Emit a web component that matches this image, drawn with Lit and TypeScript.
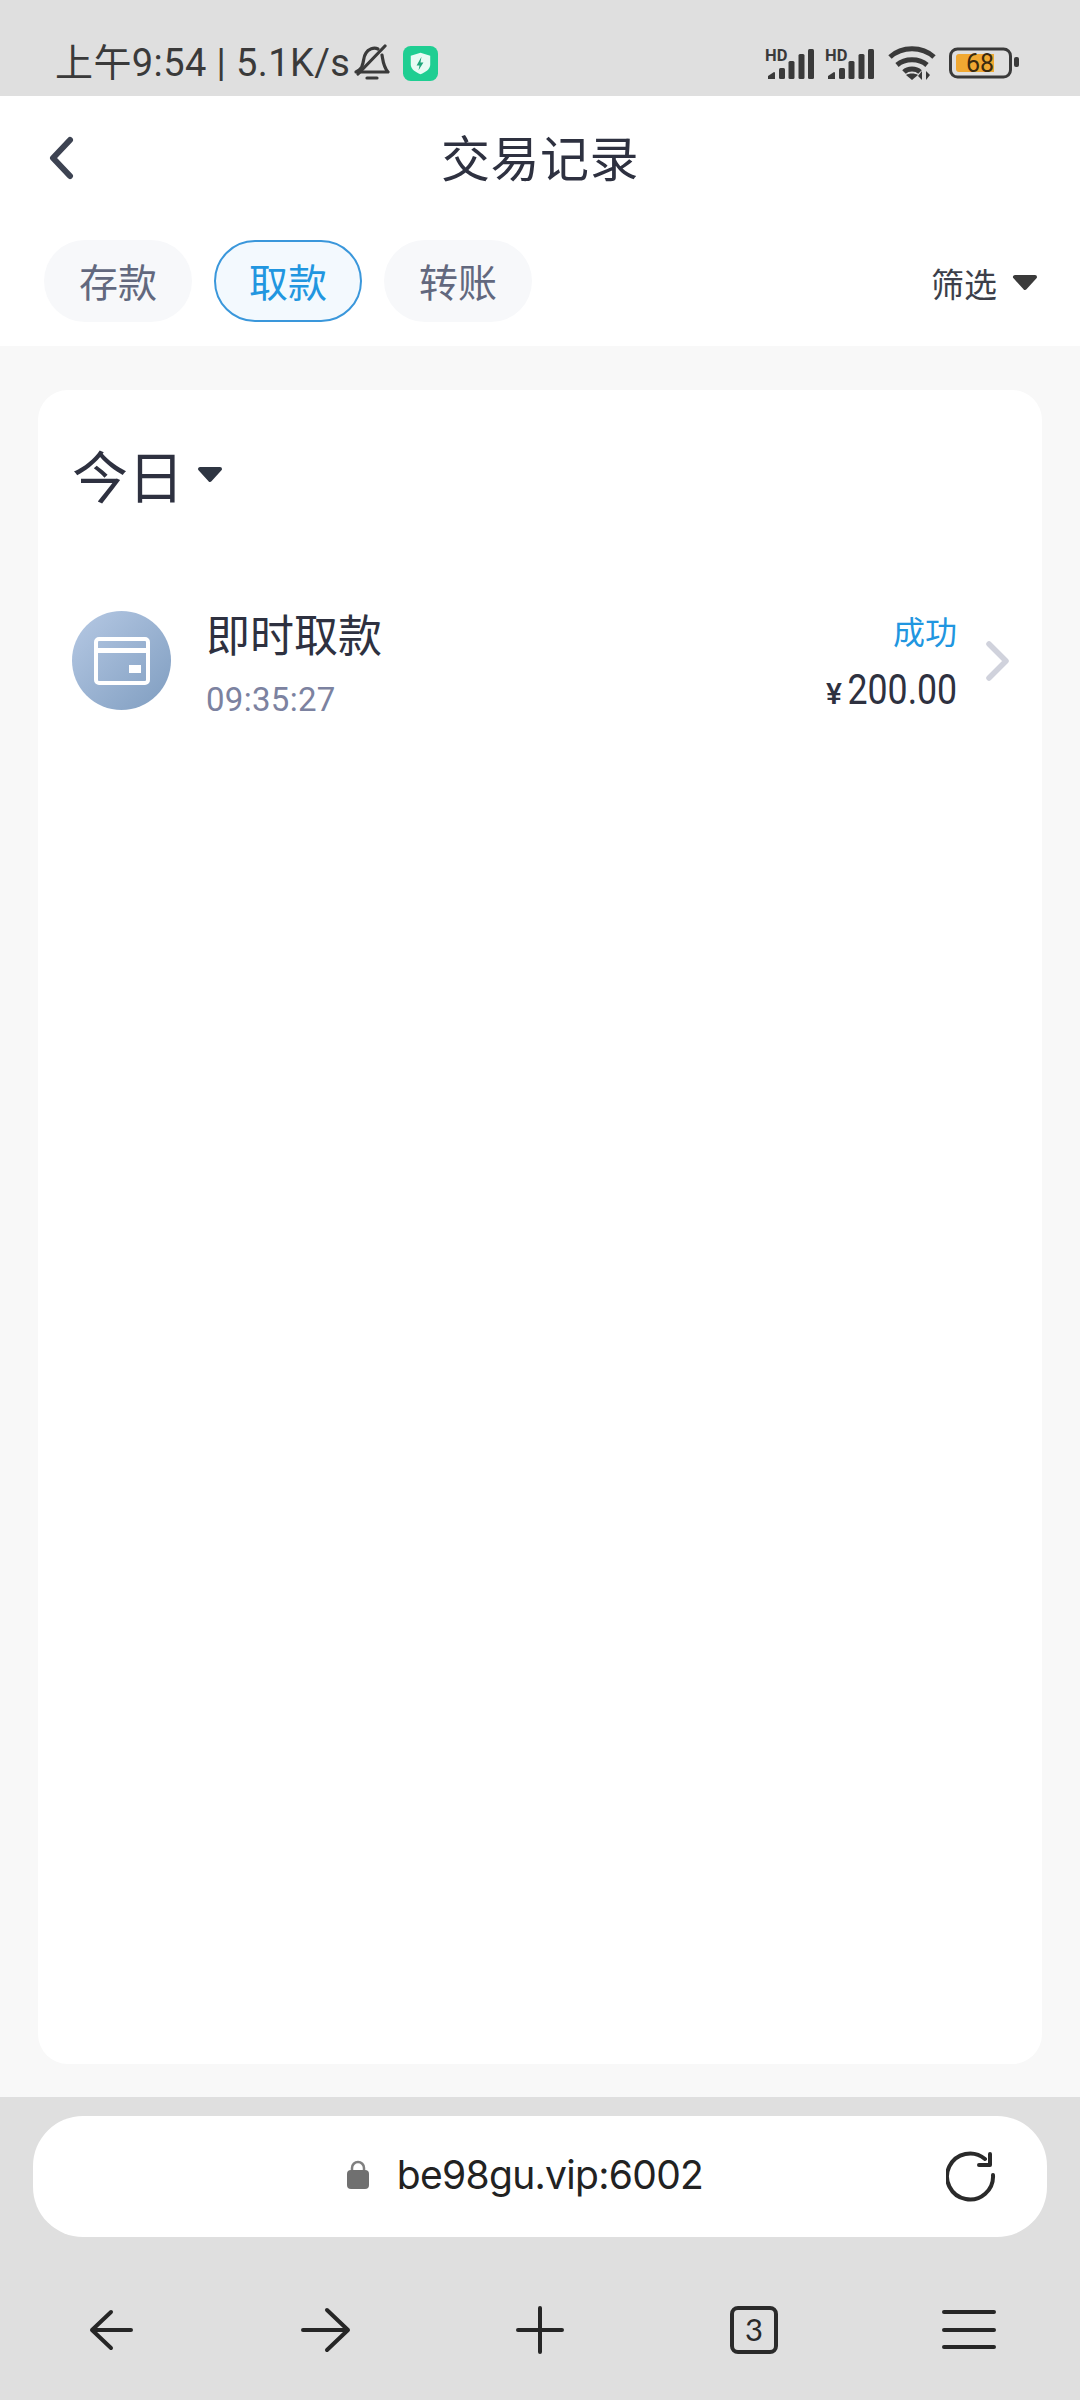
import {LitElement, html, css} from "lit";
import {customElement} from "lit/decorators.js";

const signal = html`
  <svg class="signal" width="52" height="36" viewBox="0 -4 52 36">
    <text x="0" y="11.500" font-family="Roboto, sans-serif" font-weight="700" font-size="16.500" fill="#3a3a3a">HD</text>
    <path d="M3 30v-3l6-4a1 1 0 0 1 1 1v6z" fill="#3a3a3a"/>
    <rect x="14" y="19" width="6" height="11" rx="1.500" fill="#3a3a3a"/>
    <rect x="23.500" y="12" width="6" height="18" rx="1.500" fill="#3a3a3a"/>
    <rect x="33.500" y="5" width="6" height="25" rx="1.500" fill="#3a3a3a"/>
    <rect x="43" y="0" width="6" height="30" rx="1.500" fill="#3a3a3a"/>
  </svg>
`;

const caret = (fill: string) => html`
  <svg width="26" height="17" viewBox="0 0 26 17">
    <path d="M3 3h20L13 14z" fill=${fill} stroke=${fill} stroke-width="4" stroke-linejoin="round" />
  </svg>
`;

@customElement("app-root")
export class AppRoot extends LitElement {
  static styles = css`
    :host {
      display: flex;
      flex-direction: column;
      width: 1080px;
      height: 2400px;
      background: #f8f8f8;
      font-family: "Noto Sans CJK SC", sans-serif;
      color: #2e3140;
    }
    .status {
      height: 96px;
      box-sizing: border-box;
      flex: none;
      background: #dfdfdf;
      display: flex;
      align-items: center;
      padding: 30px 61px 0 55px;
      color: #3a3a3a;
    }
    .clock {
      font-family: Roboto, "Noto Sans CJK SC", sans-serif;
      font-size: 38px;
      line-height: 44px;
      white-space: nowrap;
      letter-spacing: 0.4px;
    }
    .bell {
      margin-left: 4px;
    }
    .shield {
      margin-left: 13px;
    }
    .status-right {
      margin-left: auto;
      display: flex;
      align-items: center;
      gap: 8px;
    }
    .wifi {
      margin-left: 3px;
    }
    .battery {
      margin-left: 5px;
    }
    .head {
      flex: none;
      height: 250px;
      background: #fff;
      display: flex;
      flex-direction: column;
    }
    .nav {
      height: 124px;
      box-sizing: border-box;
      display: grid;
      grid-template-columns: 1fr auto 1fr;
      align-items: center;
      padding: 0 48px;
    }
    .title {
      font-size: 49px;
      line-height: 64px;
      letter-spacing: 0.5px;
      margin-bottom: 4px;
    }
    .tabs {
      display: flex;
      align-items: center;
      gap: 22px;
      padding: 20px 42px 0 44px;
    }
    .tab {
      width: 148px;
      height: 82px;
      box-sizing: border-box;
      padding-bottom: 2px;
      border-radius: 41px;
      background: #f7f8fa;
      color: #62687e;
      font-size: 39px;
      display: flex;
      align-items: center;
      justify-content: center;
    }
    .tab.active {
      background: #f3f9fe;
      border: 2px solid #3a97db;
      color: #2196e0;
    }
    .filter {
      margin-left: auto;
      display: flex;
      align-items: center;
      gap: 15px;
      font-size: 33px;
      line-height: 44px;
      padding-top: 3px;
      color: #3c3f4a;
    }
    .body {
      flex: 1;
      padding: 44px 38px 33px;
      display: flex;
      min-height: 0;
    }
    .card {
      flex: 1;
      background: #fff;
      border-radius: 30px;
      padding: 0 33px 0 34px;
    }
    .day {
      display: flex;
      align-items: center;
      gap: 13px;
      height: 166px;
      font-size: 56px;
    }
    .day svg {
      margin-top: 3px;
    }
    .row {
      display: flex;
      align-items: center;
      margin-top: 45px;
    }
    .avatar {
      width: 99px;
      height: 99px;
      border-radius: 50%;
      background: linear-gradient(135deg, #b6c9e4, #7f9dc0);
      display: flex;
      align-items: center;
      justify-content: center;
      flex: none;
    }
    .info {
      margin-left: 35px;
      padding-top: 4px;
      flex: 1;
      display: flex;
      flex-direction: column;
    }
    .name {
      font-size: 44px;
      line-height: 56px;
    }
    .time {
      font-family: Roboto, sans-serif;
      font-size: 33px;
      line-height: 40px;
      letter-spacing: 0.3px;
      margin-top: 19px;
      color: #7c82a0;
    }
    .side {
      display: flex;
      flex-direction: column;
      align-items: flex-end;
      padding-top: 5px;
    }
    .state {
      font-size: 32px;
      line-height: 42px;
      color: #2196e0;
    }
    .amount {
      display: flex;
      align-items: baseline;
      margin-top: 15px;
      line-height: 46px;
    }
    .yen {
      font-family: Roboto, sans-serif;
      font-size: 30px;
      font-weight: 500;
      margin-right: -17px;
    }
    .value {
      display: inline-block;
      font-family: Roboto, sans-serif;
      font-size: 43px;
      transform: scaleX(0.83);
      transform-origin: right center;
    }
    .more {
      margin-left: 28px;
      flex: none;
    }
    .bottom {
      flex: none;
      height: 303px;
      background: #dfdfdf;
      box-sizing: border-box;
      padding: 19px 33px 0 33px;
      display: flex;
      flex-direction: column;
    }
    .url {
      height: 121px;
      flex: none;
      background: #fff;
      border-radius: 50px;
      display: grid;
      grid-template-columns: 1fr auto 1fr;
      align-items: center;
      color: #222;
    }
    .address {
      display: flex;
      align-items: center;
      gap: 28px;
      font-family: Inter, sans-serif;
      font-size: 39px;
      letter-spacing: -0.7px;
      line-height: 48px;
      padding: 0 30px 4px 0;
      grid-column: 2;
    }
    .reload {
      justify-self: end;
      margin-right: 49px;
    }
    .tools {
      flex: 1;
      display: grid;
      grid-template-columns: repeat(5, 1fr);
      margin: 0 -29px;
      padding-top: 22px;
    }
    .tools svg {
      justify-self: center;
      align-self: center;
    }
  `;

  render() {
    return html`
      <div class="status">
        <span class="clock">上午9:54 | 5.1K/s</span>
        <svg class="bell" width="36" height="38" viewBox="0 0 36 38" fill="none" stroke="#3a3a3a" stroke-width="3.200" stroke-linecap="round" stroke-linejoin="round">
          <path d="M8 22c2-4 1-9 4-13 2-4 8-6 12-4" />
          <path d="M28 11c1 5 1 11 6 17H2c2-1 4-2 5-4" />
          <path d="M13 34h10" />
          <path d="M31 2 4 30" />
        </svg>
        <svg class="shield" width="35" height="35" viewBox="0 0 36 36">
          <rect width="36" height="36" rx="8" fill="#1fce92" />
          <path d="M18 7l10 3v9c0 5-5 8-10 10-5-2-10-5-10-10v-9z" fill="#e8fbf4" />
          <path d="M19 11l-5 9h3l-1 5 5-8h-3z" fill="#1fa67a" />
        </svg>
        <div class="status-right">
          ${signal} ${signal}
          <svg class="wifi" width="48" height="36" viewBox="0 0 48 36" fill="none" stroke="#3a3a3a" stroke-width="5">
            <path d="M2 12c12-11 32-11 44 0" />
            <path d="M9 20c8-7 22-7 30 0" />
            <path d="M16 27c4-4 12-4 16 0" />
            <path d="M24 35l-6-5c3-2 9-2 12 0z" fill="#3a3a3a" stroke="none" />
            <path d="M34 35v-9l-4 5zM38 26v9l4-5z" fill="#3a3a3a" stroke="none" />
          </svg>
          <svg class="battery" width="70" height="32" viewBox="0 0 70 32">
            <rect x="1.500" y="2" width="60" height="28" rx="7" fill="none" stroke="#3a3a3a" stroke-width="3" />
            <path d="M7 10a3 3 0 0 1 3-3h35v18H10a3 3 0 0 1-3-3z" fill="#f0a832" />
            <rect x="65" y="10" width="5" height="10" rx="2" fill="#3a3a3a" />
            <text x="31" y="25" text-anchor="middle" font-family="Roboto, sans-serif" font-size="25" fill="#3a2a10">68</text>
          </svg>
        </div>
      </div>

      <div class="head">
        <div class="nav">
          <svg width="26" height="44" viewBox="0 0 26 44" fill="none" stroke="#3d4352" stroke-width="6" stroke-linecap="round" stroke-linejoin="round">
            <path d="M22 4 5 22l17 18" />
          </svg>
          <div class="title">交易记录</div>
        </div>
        <div class="tabs">
          <div class="tab">存款</div>
          <div class="tab active">取款</div>
          <div class="tab">转账</div>
          <div class="filter">
            筛选
            ${caret("#3a3a3a")}
          </div>
        </div>
      </div>

      <div class="body">
        <div class="card">
          <div class="day">
            今日
            ${caret("#2e3542")}
          </div>
          <div class="row">
            <div class="avatar">
              <svg width="56" height="48" viewBox="0 0 56 48" fill="none">
                <rect x="2" y="2" width="52" height="44" rx="3" stroke="#fff" stroke-width="4" />
                <rect x="3" y="11" width="50" height="5" fill="#fff" />
                <rect x="35" y="28" width="12" height="8" fill="#fff" />
              </svg>
            </div>
            <div class="info">
              <div class="name">即时取款</div>
              <div class="time">09:35:27</div>
            </div>
            <div class="side">
              <div class="state">成功</div>
              <div class="amount"><span class="yen">¥</span><span class="value">200.00</span></div>
            </div>
            <svg class="more" width="24" height="40" viewBox="0 0 24 40" fill="none" stroke="#d0d2dc" stroke-width="5.500" stroke-linecap="round" stroke-linejoin="round">
              <path d="M4 3l17 17L4 37" />
            </svg>
          </div>
        </div>
      </div>

      <div class="bottom">
        <div class="url">
          <div class="address">
            <svg width="22" height="29" viewBox="0 0 22 29">
              <path d="M5 12V8a6 6 0 0 1 12 0v4" fill="none" stroke="#808080" stroke-width="2.500" />
              <rect y="10" width="22" height="19" rx="4" fill="#707070" />
            </svg>
            <span>be98gu.vip:6002</span>
          </div>
          <svg class="reload" width="52" height="52" viewBox="0 0 52 52" fill="none" stroke="#2a2a2a" stroke-width="4" stroke-linecap="round" stroke-linejoin="round">
            <path d="M47 24a23 23 0 1 1-8-16" />
            <path d="M44 3v11H33" />
          </svg>
        </div>
        <div class="tools">
          <svg width="44" height="42" viewBox="0 0 44 42" fill="none" stroke="#262626" stroke-width="4" stroke-linecap="round" stroke-linejoin="round">
            <path d="M22 3 3 21l19 18M3 21h39" />
          </svg>
          <svg width="50" height="46" viewBox="0 0 50 46" fill="none" stroke="#262626" stroke-width="4" stroke-linecap="round" stroke-linejoin="round">
            <path d="M26 3l21 20-21 20M2 23h45" />
          </svg>
          <svg width="48" height="48" viewBox="0 0 48 48" fill="none" stroke="#262626" stroke-width="4" stroke-linecap="round">
            <path d="M2 24h44M24 2v44" />
          </svg>
          <svg width="48" height="48" viewBox="0 0 48 48">
            <rect x="2" y="2" width="44" height="44" rx="6" fill="none" stroke="#2a2a2a" stroke-width="4" />
            <text x="24" y="35" text-anchor="middle" font-family="Lato, sans-serif" font-size="31" fill="#2a2a2a">3</text>
          </svg>
          <svg width="54" height="42" viewBox="0 0 54 42" fill="none" stroke="#262626" stroke-width="4" stroke-linecap="round">
            <path d="M2 3h50M2 21h50M2 38h50" />
          </svg>
        </div>
      </div>
    `;
  }
}
